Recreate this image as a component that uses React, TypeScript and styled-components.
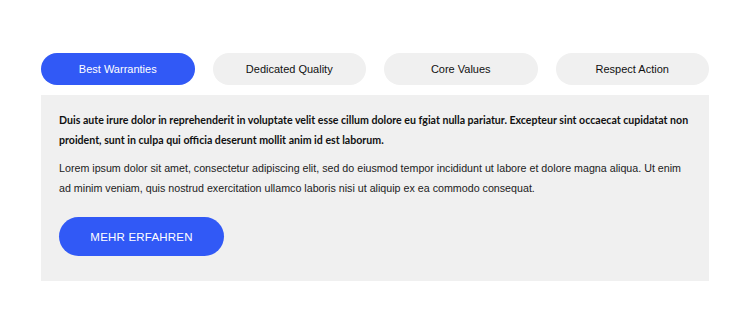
import React, { useState } from "react";
import styled, { createGlobalStyle } from "styled-components";

const GlobalStyle = createGlobalStyle`
  body {
    margin: 0;
    background: #ffffff;
    font-family: "Liberation Sans", Arial, sans-serif;
  }
`;

const Section = styled.div`
  width: 668px;
  margin: 0 auto;
  padding-top: 53px;
`;

const TabList = styled.div`
  display: grid;
  grid-template-columns: repeat(4, 1fr);
  column-gap: 18px;
  margin-bottom: 10px;
`;

const Tab = styled.button<{ active: boolean }>`
  height: 32px;
  border: none;
  border-radius: 16px;
  background: ${(p) => (p.active ? "#3159f6" : "#f0f0f0")};
  color: ${(p) => (p.active ? "#ffffff" : "#111111")};
  font-family: inherit;
  font-size: 11px;
  cursor: pointer;
  padding: 0;
`;

const Panel = styled.div`
  background: #f0f0f0;
  padding: 15px 18px 25px;
`;

const Lead = styled.p`
  margin: 0 0 9px;
  font-family: Lato, "Liberation Sans", sans-serif;
  font-size: 10.6px;
  font-weight: bold;
  line-height: 20px;
  color: #111111;
`;

const Body = styled.p`
  margin: 0 0 19px;
  font-size: 10.7px;
  line-height: 19.5px;
  color: #222222;
`;

const MoreButton = styled.button`
  width: 165px;
  height: 39px;
  border: none;
  border-radius: 20px;
  background: #3159f6;
  color: #ffffff;
  font-family: inherit;
  font-size: 11.5px;
  letter-spacing: 0.2px;
  cursor: pointer;
`;

const tabs = ["Best Warranties", "Dedicated Quality", "Core Values", "Respect Action"];

export default function App() {
  const [active, setActive] = useState(0);

  return (
    <>
      <GlobalStyle />
      <Section>
        <TabList>
          {tabs.map((t, i) => (
            <Tab key={t} active={i === active} onClick={() => setActive(i)}>
              {t}
            </Tab>
          ))}
        </TabList>
        <Panel>
          <Lead>
            Duis aute irure dolor in reprehenderit in voluptate velit esse cillum dolore eu fgiat nulla pariatur.
            Excepteur sint occaecat cupidatat non proident, sunt in culpa qui officia deserunt mollit anim id est
            laborum.
          </Lead>
          <Body>
            Lorem ipsum dolor sit amet, consectetur adipiscing elit, sed do eiusmod tempor incididunt ut labore et
            dolore magna aliqua. Ut enim ad minim veniam, quis nostrud exercitation ullamco laboris nisi ut aliquip ex
            ea commodo consequat.
          </Body>
          <MoreButton>MEHR ERFAHREN</MoreButton>
        </Panel>
      </Section>
    </>
  );
}
